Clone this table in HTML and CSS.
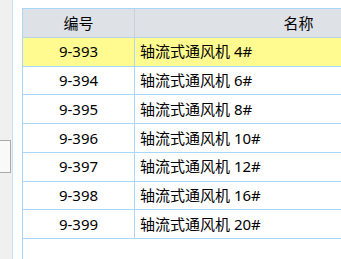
FILE: index.html
```html
<!DOCTYPE html>
<html lang="zh-CN">
<head>
<meta charset="utf-8">
<link rel="stylesheet" href="styles.css">
</head>
<body>
<div class="app">
  <div class="side">
    <div class="field"></div>
  </div>
  <div class="main">
    <div class="grid">
      <div class="row head">
        <div class="cell c1">编号</div>
        <div class="cell c2">名称</div>
      </div>
      <div class="row sel">
        <div class="cell c1">9-393</div>
        <div class="cell c2 name">轴流式通风机 4#</div>
      </div>
      <div class="row">
        <div class="cell c1">9-394</div>
        <div class="cell c2 name">轴流式通风机 6#</div>
      </div>
      <div class="row">
        <div class="cell c1">9-395</div>
        <div class="cell c2 name">轴流式通风机 8#</div>
      </div>
      <div class="row">
        <div class="cell c1">9-396</div>
        <div class="cell c2 name">轴流式通风机 10#</div>
      </div>
      <div class="row">
        <div class="cell c1">9-397</div>
        <div class="cell c2 name">轴流式通风机 12#</div>
      </div>
      <div class="row">
        <div class="cell c1">9-398</div>
        <div class="cell c2 name">轴流式通风机 16#</div>
      </div>
      <div class="row">
        <div class="cell c1">9-399</div>
        <div class="cell c2 name">轴流式通风机 20#</div>
      </div>
    </div>
  </div>
</div>
</body>
</html>
```
FILE: styles.css
```css
html, body {
  margin: 0;
  padding: 0;
  background: #ffffff;
  overflow: hidden;
}
.app {
  display: flex;
  width: 341px;
  height: 259px;
  overflow: hidden;
  font-family: "Noto Sans", "Noto Sans CJK SC", sans-serif;
  font-size: 15px;
  color: #000;
}
.side {
  width: 12px;
  flex: none;
  background: #f0f0f0;
  border-right: 1px solid #c4e1f7;
  padding-top: 140px;
  box-sizing: border-box;
  width: 13px;
}
.field {
  width: 40px;
  height: 33px;
  margin-left: -29px;
  box-sizing: border-box;
  border: 1px solid #a9a9a9;
  background: #f9f9f9;
}
.main {
  flex: 1;
  padding: 8px 0 0 9px;
  min-width: 0;
}
.grid {
  width: 440px;
  height: 260px;
  border-left: 1px solid #a9d5f6;
  border-top: 1px solid #a9d5f6;
  box-sizing: border-box;
}
.row {
  display: grid;
  grid-template-columns: 112px 1fr;
  height: 28.72px;
  box-sizing: border-box;
  border-bottom: 1px solid #aad7f7;
}
.row.head {
  height: 29px;
  background: #dee1e6;
  border-bottom-color: #b9d3ea;
}
.row.sel {
  background: #fffb91;
}
.cell {
  display: flex;
  align-items: center;
  line-height: 1;
  white-space: nowrap;
}
.c1 {
  justify-content: center;
  border-right: 1px solid #aad7f7;
}
.head .c1 {
  border-right-color: #c9d2dc;
}
.c2 {
  justify-content: center;
  padding-left: 5px;
}
.head .c2 {
  padding-left: 0;
}
.c2.name {
  justify-content: flex-start;
}
```
